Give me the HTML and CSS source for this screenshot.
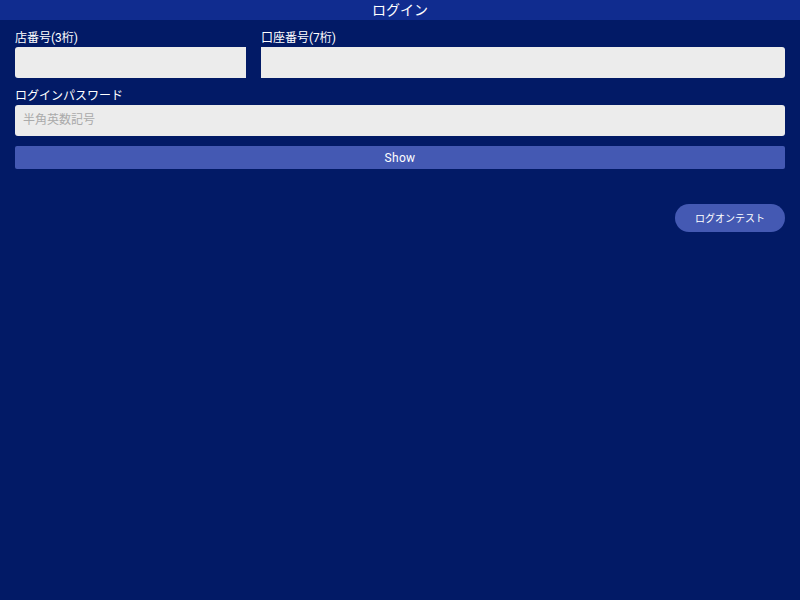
FILE: index.html
```html
<!DOCTYPE html>
<html lang="ja">
<head>
<meta charset="utf-8">
<title>ログイン</title>
<link rel="stylesheet" href="styles.css">
</head>
<body>
<header class="header">ログイン</header>
<main class="content">
  <div class="row">
    <div class="field field-branch">
      <span class="label">店番号(3桁)</span>
      <input class="input input-left" type="text">
    </div>
    <div class="field field-account">
      <span class="label">口座番号(7桁)</span>
      <input class="input input-right" type="text">
    </div>
  </div>
  <div class="field field-pass">
    <span class="label">ログインパスワード</span>
    <input class="input input-full" type="password" placeholder="半角英数記号">
  </div>
  <button class="show-btn" type="button">Show</button>
  <div class="actions">
    <button class="test-btn" type="button">ログオンテスト</button>
  </div>
</main>
</body>
</html>
```

FILE: styles.css
```css
html, body {
  margin: 0;
  padding: 0;
  background: #021a66;
  font-family: "Roboto", "Noto Sans CJK JP", sans-serif;
  color: #fff;
}
.header {
  height: 20px;
  line-height: 20px;
  background: #102c8f;
  text-align: center;
  font-size: 14px;
}
.content {
  padding: 8px 15px 0;
}
.row {
  display: flex;
  gap: 15px;
}
.field {
  display: flex;
  flex-direction: column;
}
.field-branch {
  width: 231px;
}
.field-account {
  flex: 1;
}
.field-pass {
  margin-top: 8px;
}
.label {
  font-size: 12px;
  line-height: 18px;
  height: 18px;
  padding-top: 1px;
}
.input {
  box-sizing: border-box;
  height: 31px;
  border: none;
  background: #ececec;
  padding: 0 8px 2px;
  font-family: "Roboto", "Noto Sans CJK JP", sans-serif;
  font-size: 12px;
  color: #333;
  outline: none;
  margin: 0;
}
.input::placeholder {
  color: #aaa;
}
.input-left {
  border-radius: 3px 0 0 3px;
}
.input-right {
  border-radius: 0 3px 3px 0;
}
.input-full {
  border-radius: 3px;
}
.show-btn {
  display: block;
  width: 100%;
  height: 23px;
  margin-top: 10px;
  border: none;
  border-radius: 2px;
  background: #4459b3;
  color: #fff;
  font-family: "Roboto", "Noto Sans CJK JP", sans-serif;
  font-size: 12px;
  letter-spacing: 0.3px;
  padding: 0;
}
.actions {
  display: flex;
  justify-content: flex-end;
  margin-top: 35px;
}
.test-btn {
  width: 110px;
  height: 28px;
  border: none;
  border-radius: 14px;
  background: #4459b3;
  color: #fff;
  font-family: "Roboto", "Noto Sans CJK JP", sans-serif;
  font-size: 10px;
  padding: 0 0 2px;
}
```
